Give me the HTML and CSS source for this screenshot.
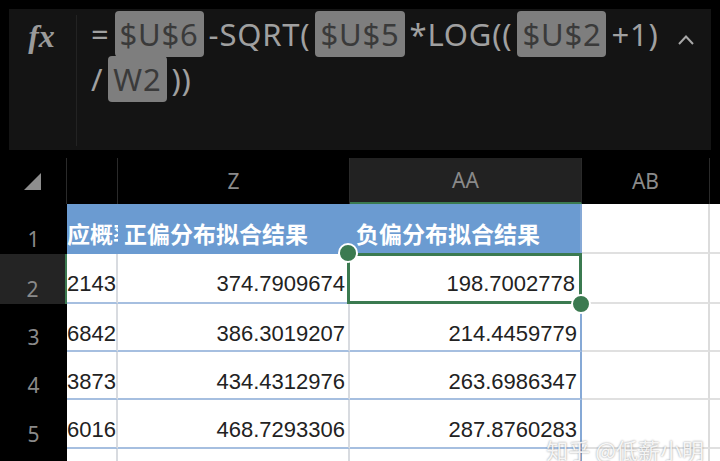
FILE: index.html
```html
<!DOCTYPE html>
<html lang="zh">
<head>
    <meta charset="UTF-8">
    <title>公式栏</title>
    <link rel="stylesheet" href="styles.css">
</head>
<body>

<div class="formula-bar">
    <div class="formula-panel">
        <div class="fx">fx</div>
        <div class="formula">=<span class="ref">$U$6</span>-SQRT(<span class="ref">$U$5</span>*LOG((<span class="ref">$U$2</span>+1)<br>/<span class="ref">W2</span>))</div>
        <svg class="caret" width="18" height="12" viewBox="0 0 18 12">
            <path d="M2 10 L9 2.5 L16 10" fill="none" stroke="#a8a8a8" stroke-width="2"/>
        </svg>
    </div>
</div>

<div class="sheet">
    <div class="corner"><span class="tri"></span></div>
    <div class="colhead"></div>
    <div class="colhead">Z</div>
    <div class="colhead active">AA</div>
    <div class="colhead">AB</div>
    <div class="colhead last"></div>

    <div class="rowhead">1</div>
    <div class="cell title clip">应概率密度</div>
    <div class="cell title">正偏分布拟合结果</div>
    <div class="cell title edge">负偏分布拟合结果</div>
    <div class="cell empty"></div>
    <div class="cell empty last"></div>

    <div class="rowhead active">2</div>
    <div class="cell num">2143</div>
    <div class="cell num">374.7909674</div>
    <div class="cell num edge selected">198.7002778
        <span class="handle tl"></span>
        <span class="handle br"></span>
    </div>
    <div class="cell empty"></div>
    <div class="cell empty last"></div>

    <div class="rowhead">3</div>
    <div class="cell num">6842</div>
    <div class="cell num">386.3019207</div>
    <div class="cell num edge">214.4459779</div>
    <div class="cell empty"></div>
    <div class="cell empty last"></div>

    <div class="rowhead">4</div>
    <div class="cell num">3873</div>
    <div class="cell num">434.4312976</div>
    <div class="cell num edge">263.6986347</div>
    <div class="cell empty"></div>
    <div class="cell empty last"></div>

    <div class="rowhead">5</div>
    <div class="cell num">6016</div>
    <div class="cell num">468.7293306</div>
    <div class="cell num edge">287.8760283</div>
    <div class="cell empty"></div>
    <div class="cell empty last"></div>

    <div class="rowhead"></div>
    <div class="cell num"></div>
    <div class="cell num"></div>
    <div class="cell num edge"></div>
    <div class="cell empty"></div>
    <div class="cell empty last"></div>

    <div class="watermark">知乎 @低薪小明</div>
</div>

</body>
</html>
```

FILE: styles.css
```css
body {
    margin: 0;
    width: 720px;
    height: 461px;
    overflow: hidden;
    background-color: #000;
    font-family: "Noto Sans", "Noto Sans CJK SC", sans-serif;
}

.formula-bar {
    padding: 9px 9px 8px 9px;
}
.formula-panel {
    height: 141px;
    background-color: #141414;
    display: flex;
    position: relative;
}
.fx {
    width: 68px;
    margin: 6px 0 4px 0;
    border-right: 1px solid #232323;
    font-family: "Liberation Serif", serif;
    font-style: italic;
    font-weight: bold;
    font-size: 32px;
    color: #9a9a9a;
    text-align: center;
    padding-right: 2px;
    box-sizing: border-box;
    line-height: 42px;
}
.formula {
    flex: 1;
    padding: 3px 0 0 14px;
    font-size: 31px;
    letter-spacing: 0.8px;
    line-height: 45px;
    color: #a0a0a0;
}
.formula .ref {
    background-color: #7e7e7e;
    color: #3a3a3a;
    border-radius: 4px;
    padding: 2px 5px;
    margin: 0 5px;
}
.caret {
    position: absolute;
    right: 16px;
    top: 25px;
}

.sheet {
    position: relative;
    display: grid;
    grid-template-columns: 67px 51px 232px 232px 128px 10px;
    grid-template-rows: 46px 50px 50px 48px 48px 49px 30px;
}

.corner {
    background-color: #000;
    border-right: 1px solid #2a2a2a;
    display: flex;
    align-items: center;
    justify-content: center;
}
.tri {
    width: 0;
    height: 0;
    border-left: 17px solid transparent;
    border-bottom: 17px solid #8e8e8e;
    margin-left: -1px;
}
.colhead {
    background-color: #000;
    border-right: 1px solid #2a2a2a;
    color: #8a8a8a;
    font-size: 21px;
    display: flex;
    align-items: center;
    justify-content: center;
    box-sizing: border-box;
}
.colhead.active {
    background-color: #222;
    border-bottom: 2px solid #3b7a50;
}
.colhead.last {
    border-right: none;
}

.rowhead {
    background-color: #000;
    color: #8a8a8a;
    font-size: 21px;
    display: flex;
    align-items: flex-end;
    justify-content: center;
    padding-bottom: 1px;
    box-sizing: border-box;
}
.rowhead.active {
    background-color: #242424;
    border-right: 2px solid #3b7a50;
}

.cell {
    background-color: #fff;
    border-right: 2px solid #d8dbe0;
    border-bottom: 2px solid #a6bfe0;
    box-sizing: border-box;
    white-space: nowrap;
    overflow: hidden;
}
.cell.edge {
    border-right-color: #86a9d6;
}
.cell.title {
    background-color: #6b9bd1;
    border-right-color: #6b9bd1;
    border-bottom-color: #6b9bd1;
    color: #fff;
    font-family: "Noto Sans CJK SC", sans-serif;
    font-weight: bold;
    font-size: 23px;
    line-height: 58px;
    padding-left: 6px;
}
.cell.title.clip {
    padding-left: 0;
    border-right: none;
}
.cell.title.edge {
    border-right-color: #86a9d6;
}
.cell.num {
    font-family: "Liberation Sans", sans-serif;
    font-size: 22px;
    color: #222;
    text-align: right;
    padding-right: 3px;
    line-height: 60px;
}
.cell.empty {
    border-right-color: #dcdcdc;
    border-bottom-color: #e0e0e0;
}
.cell.last {
    border-right: none;
}

.cell.selected {
    position: relative;
    overflow: visible;
    padding-right: 5px;
}
.cell.selected::before {
    content: "";
    position: absolute;
    left: -3px;
    top: -1px;
    right: -2px;
    bottom: -2px;
    border: 3px solid #3b7a50;
}
.handle {
    position: absolute;
    width: 16px;
    height: 16px;
    border-radius: 50%;
    background-color: #3b7a50;
    border: 2px solid #fff;
    z-index: 2;
}
.handle.tl {
    left: -12px;
    top: -11px;
}
.handle.br {
    right: -11px;
    bottom: -12px;
}

.watermark {
    position: absolute;
    right: 16px;
    bottom: 14px;
    font-family: "Noto Sans CJK SC", sans-serif;
    font-size: 22px;
    color: rgba(255, 255, 255, 0.88);
    text-shadow: 0 0 2px rgba(0, 0, 0, 0.45);
}
```
